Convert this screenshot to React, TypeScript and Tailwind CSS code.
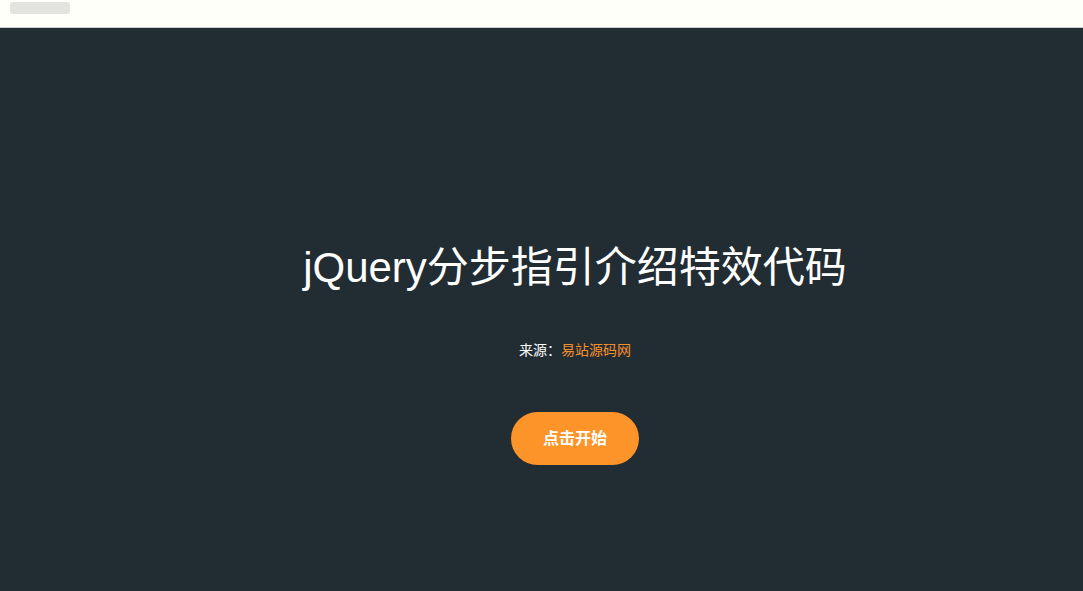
import React from 'react';

const App: React.FC = () => {
  return (
    <div
      className="w-full h-[591px] flex flex-col bg-[#222c33]"
      style={{ fontFamily: '"Liberation Sans", Arial, "Noto Sans CJK SC", sans-serif' }}
    >
      <div className="h-[28px] shrink-0 bg-[#fffffa] border-b border-[#c9ced0] px-[10px] pt-[2px]">
        <div className="w-[60px] h-[12px] rounded-[3px] bg-[#e3e3df]" />
      </div>
      <div className="flex-1 flex flex-col items-center pl-[67px] pt-[216px]">
        <h1 className="text-[42px] leading-[48px] text-white font-normal">jQuery分步指引介绍特效代码</h1>
        <p className="mt-[48px] text-[14px] leading-[20px] text-white">
          来源：<span className="text-[#f7902c]">易站源码网</span>
        </p>
        <button className="mt-[52px] w-[128px] h-[53px] rounded-full bg-[#fd9429] text-white text-[16px] font-bold">
          点击开始
        </button>
      </div>
    </div>
  );
};

export default App;
